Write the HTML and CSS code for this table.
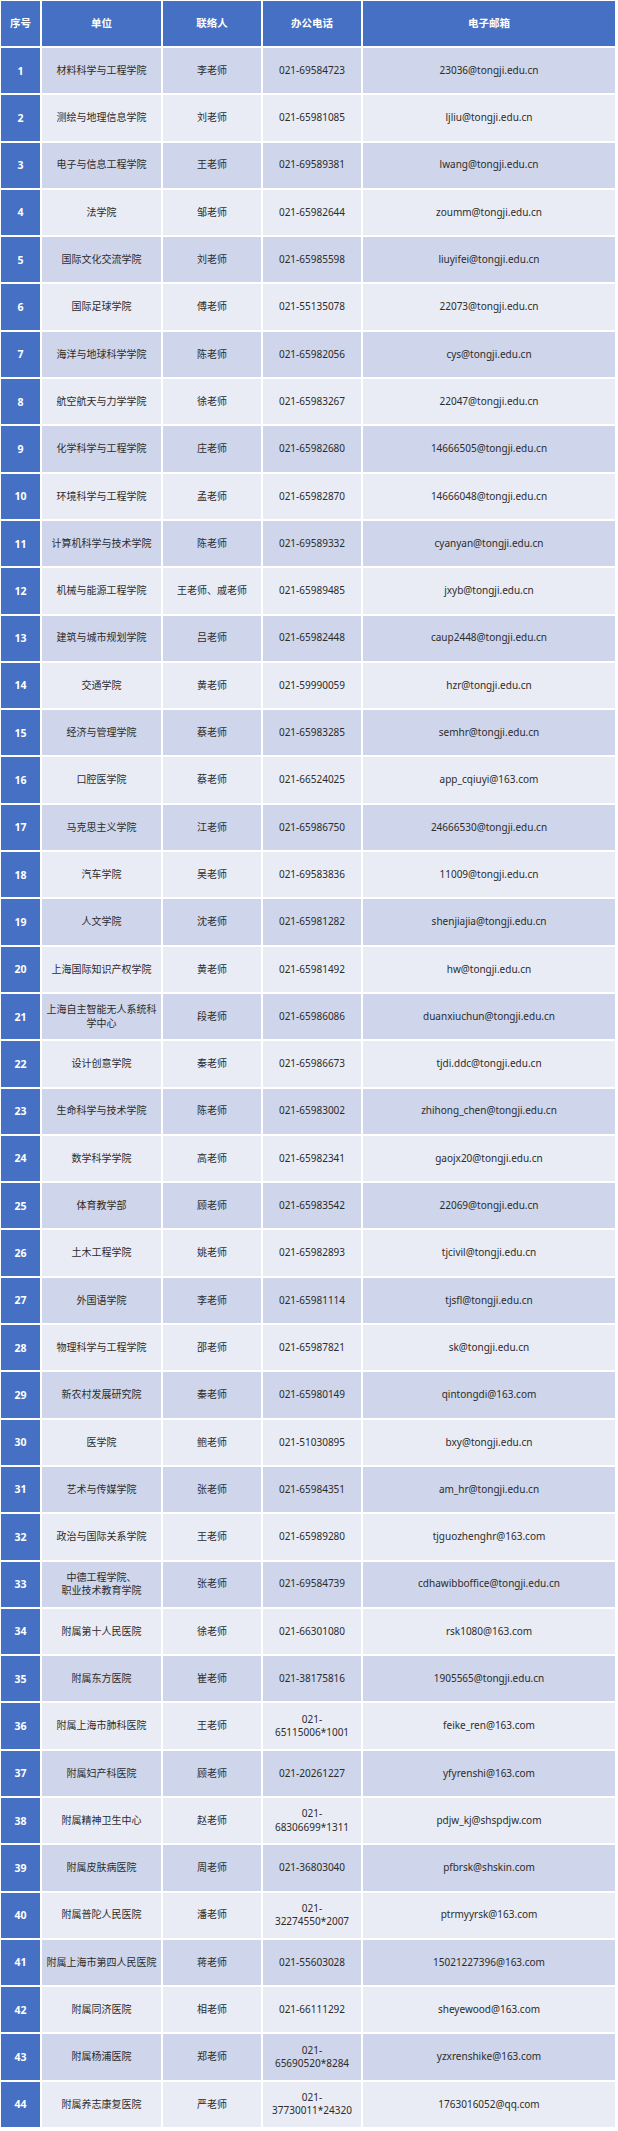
FILE: index.html
```html
<!DOCTYPE html>
<html lang="zh-CN">
<head>
<meta charset="utf-8">
<title>联络表</title>
<link rel="stylesheet" href="styles.css">
</head>
<body>
<div class="table">
  <div class="h">序号</div><div class="h">单位</div><div class="h">联络人</div><div class="h">办公电话</div><div class="h">电子邮箱</div>

  <div class="n">1</div><div class="c o">材料科学与工程学院</div><div class="c o">李老师</div><div class="c o">021-69584723</div><div class="c o">23036@tongji.edu.cn</div>
  <div class="n">2</div><div class="c e">测绘与地理信息学院</div><div class="c e">刘老师</div><div class="c e">021-65981085</div><div class="c e">ljliu@tongji.edu.cn</div>
  <div class="n">3</div><div class="c o">电子与信息工程学院</div><div class="c o">王老师</div><div class="c o">021-69589381</div><div class="c o">lwang@tongji.edu.cn</div>
  <div class="n">4</div><div class="c e">法学院</div><div class="c e">邹老师</div><div class="c e">021-65982644</div><div class="c e">zoumm@tongji.edu.cn</div>
  <div class="n">5</div><div class="c o">国际文化交流学院</div><div class="c o">刘老师</div><div class="c o">021-65985598</div><div class="c o">liuyifei@tongji.edu.cn</div>
  <div class="n">6</div><div class="c e">国际足球学院</div><div class="c e">傅老师</div><div class="c e">021-55135078</div><div class="c e">22073@tongji.edu.cn</div>
  <div class="n">7</div><div class="c o">海洋与地球科学学院</div><div class="c o">陈老师</div><div class="c o">021-65982056</div><div class="c o">cys@tongji.edu.cn</div>
  <div class="n">8</div><div class="c e">航空航天与力学学院</div><div class="c e">徐老师</div><div class="c e">021-65983267</div><div class="c e">22047@tongji.edu.cn</div>
  <div class="n">9</div><div class="c o">化学科学与工程学院</div><div class="c o">庄老师</div><div class="c o">021-65982680</div><div class="c o">14666505@tongji.edu.cn</div>
  <div class="n">10</div><div class="c e">环境科学与工程学院</div><div class="c e">孟老师</div><div class="c e">021-65982870</div><div class="c e">14666048@tongji.edu.cn</div>
  <div class="n">11</div><div class="c o">计算机科学与技术学院</div><div class="c o">陈老师</div><div class="c o">021-69589332</div><div class="c o">cyanyan@tongji.edu.cn</div>
  <div class="n">12</div><div class="c e">机械与能源工程学院</div><div class="c e">王老师、戚老师</div><div class="c e">021-65989485</div><div class="c e">jxyb@tongji.edu.cn</div>
  <div class="n">13</div><div class="c o">建筑与城市规划学院</div><div class="c o">吕老师</div><div class="c o">021-65982448</div><div class="c o">caup2448@tongji.edu.cn</div>
  <div class="n">14</div><div class="c e">交通学院</div><div class="c e">黄老师</div><div class="c e">021-59990059</div><div class="c e">hzr@tongji.edu.cn</div>
  <div class="n">15</div><div class="c o">经济与管理学院</div><div class="c o">蔡老师</div><div class="c o">021-65983285</div><div class="c o">semhr@tongji.edu.cn</div>
  <div class="n">16</div><div class="c e">口腔医学院</div><div class="c e">蔡老师</div><div class="c e">021-66524025</div><div class="c e">app_cqiuyi@163.com</div>
  <div class="n">17</div><div class="c o">马克思主义学院</div><div class="c o">江老师</div><div class="c o">021-65986750</div><div class="c o">24666530@tongji.edu.cn</div>
  <div class="n">18</div><div class="c e">汽车学院</div><div class="c e">吴老师</div><div class="c e">021-69583836</div><div class="c e">11009@tongji.edu.cn</div>
  <div class="n">19</div><div class="c o">人文学院</div><div class="c o">沈老师</div><div class="c o">021-65981282</div><div class="c o">shenjiajia@tongji.edu.cn</div>
  <div class="n">20</div><div class="c e">上海国际知识产权学院</div><div class="c e">黄老师</div><div class="c e">021-65981492</div><div class="c e">hw@tongji.edu.cn</div>
  <div class="n">21</div><div class="c o">上海自主智能无人系统科学中心</div><div class="c o">段老师</div><div class="c o">021-65986086</div><div class="c o">duanxiuchun@tongji.edu.cn</div>
  <div class="n">22</div><div class="c e">设计创意学院</div><div class="c e">秦老师</div><div class="c e">021-65986673</div><div class="c e">tjdi.ddc@tongji.edu.cn</div>
  <div class="n">23</div><div class="c o">生命科学与技术学院</div><div class="c o">陈老师</div><div class="c o">021-65983002</div><div class="c o">zhihong_chen@tongji.edu.cn</div>
  <div class="n">24</div><div class="c e">数学科学学院</div><div class="c e">高老师</div><div class="c e">021-65982341</div><div class="c e">gaojx20@tongji.edu.cn</div>
  <div class="n">25</div><div class="c o">体育教学部</div><div class="c o">顾老师</div><div class="c o">021-65983542</div><div class="c o">22069@tongji.edu.cn</div>
  <div class="n">26</div><div class="c e">土木工程学院</div><div class="c e">姚老师</div><div class="c e">021-65982893</div><div class="c e">tjcivil@tongji.edu.cn</div>
  <div class="n">27</div><div class="c o">外国语学院</div><div class="c o">李老师</div><div class="c o">021-65981114</div><div class="c o">tjsfl@tongji.edu.cn</div>
  <div class="n">28</div><div class="c e">物理科学与工程学院</div><div class="c e">邵老师</div><div class="c e">021-65987821</div><div class="c e">sk@tongji.edu.cn</div>
  <div class="n">29</div><div class="c o">新农村发展研究院</div><div class="c o">秦老师</div><div class="c o">021-65980149</div><div class="c o">qintongdi@163.com</div>
  <div class="n">30</div><div class="c e">医学院</div><div class="c e">鲍老师</div><div class="c e">021-51030895</div><div class="c e">bxy@tongji.edu.cn</div>
  <div class="n">31</div><div class="c o">艺术与传媒学院</div><div class="c o">张老师</div><div class="c o">021-65984351</div><div class="c o">am_hr@tongji.edu.cn</div>
  <div class="n">32</div><div class="c e">政治与国际关系学院</div><div class="c e">王老师</div><div class="c e">021-65989280</div><div class="c e">tjguozhenghr@163.com</div>
  <div class="n">33</div><div class="c o">中德工程学院、<br>职业技术教育学院</div><div class="c o">张老师</div><div class="c o">021-69584739</div><div class="c o">cdhawibboffice@tongji.edu.cn</div>
  <div class="n">34</div><div class="c e">附属第十人民医院</div><div class="c e">徐老师</div><div class="c e">021-66301080</div><div class="c e">rsk1080@163.com</div>
  <div class="n">35</div><div class="c o">附属东方医院</div><div class="c o">崔老师</div><div class="c o">021-38175816</div><div class="c o">1905565@tongji.edu.cn</div>
  <div class="n">36</div><div class="c e">附属上海市肺科医院</div><div class="c e">王老师</div><div class="c e">021-<br>65115006*1001</div><div class="c e">feike_ren@163.com</div>
  <div class="n">37</div><div class="c o">附属妇产科医院</div><div class="c o">顾老师</div><div class="c o">021-20261227</div><div class="c o">yfyrenshi@163.com</div>
  <div class="n">38</div><div class="c e">附属精神卫生中心</div><div class="c e">赵老师</div><div class="c e">021-<br>68306699*1311</div><div class="c e">pdjw_kj@shspdjw.com</div>
  <div class="n">39</div><div class="c o">附属皮肤病医院</div><div class="c o">周老师</div><div class="c o">021-36803040</div><div class="c o">pfbrsk@shskin.com</div>
  <div class="n">40</div><div class="c e">附属普陀人民医院</div><div class="c e">潘老师</div><div class="c e">021-<br>32274550*2007</div><div class="c e">ptrmyyrsk@163.com</div>
  <div class="n">41</div><div class="c o">附属上海市第四人民医院</div><div class="c o">蒋老师</div><div class="c o">021-55603028</div><div class="c o">15021227396@163.com</div>
  <div class="n">42</div><div class="c e">附属同济医院</div><div class="c e">相老师</div><div class="c e">021-66111292</div><div class="c e">sheyewood@163.com</div>
  <div class="n">43</div><div class="c o">附属杨浦医院</div><div class="c o">郑老师</div><div class="c o">021-<br>65690520*8284</div><div class="c o">yzxrenshike@163.com</div>
  <div class="n">44</div><div class="c e">附属养志康复医院</div><div class="c e">严老师</div><div class="c e">021-<br>37730011*24320</div><div class="c e">1763016052@qq.com</div>
</div>
</body>
</html>
```

FILE: styles.css
```css
html, body {
  margin: 0;
  padding: 0;
  background: #ffffff;
}

body {
  font-family: "Noto Sans", "Noto Sans CJK SC", sans-serif;
  font-size: 10px;
  color: #2c2c2c;
}

.table {
  display: grid;
  grid-template-columns: 39px 119px 98px 98px 252px;
  grid-template-rows: 45px;
  grid-auto-rows: 45.3px;
  gap: 2px;
  padding: 1px 0 0 1px;
  width: max-content;
}

.h, .n, .c {
  display: flex;
  align-items: center;
  justify-content: center;
  text-align: center;
  padding: 0 3px;
  line-height: 1.35;
}

.h {
  background: #4570c3;
  color: #ffffff;
  font-weight: 700;
  font-size: 10.5px;
}

.n {
  background: #4570c3;
  color: #ffffff;
  font-weight: 700;
  font-size: 10.5px;
  padding: 0;
}

.c.o {
  background: #cfd5ea;
}

.c.e {
  background: #e9ebf5;
}
```
